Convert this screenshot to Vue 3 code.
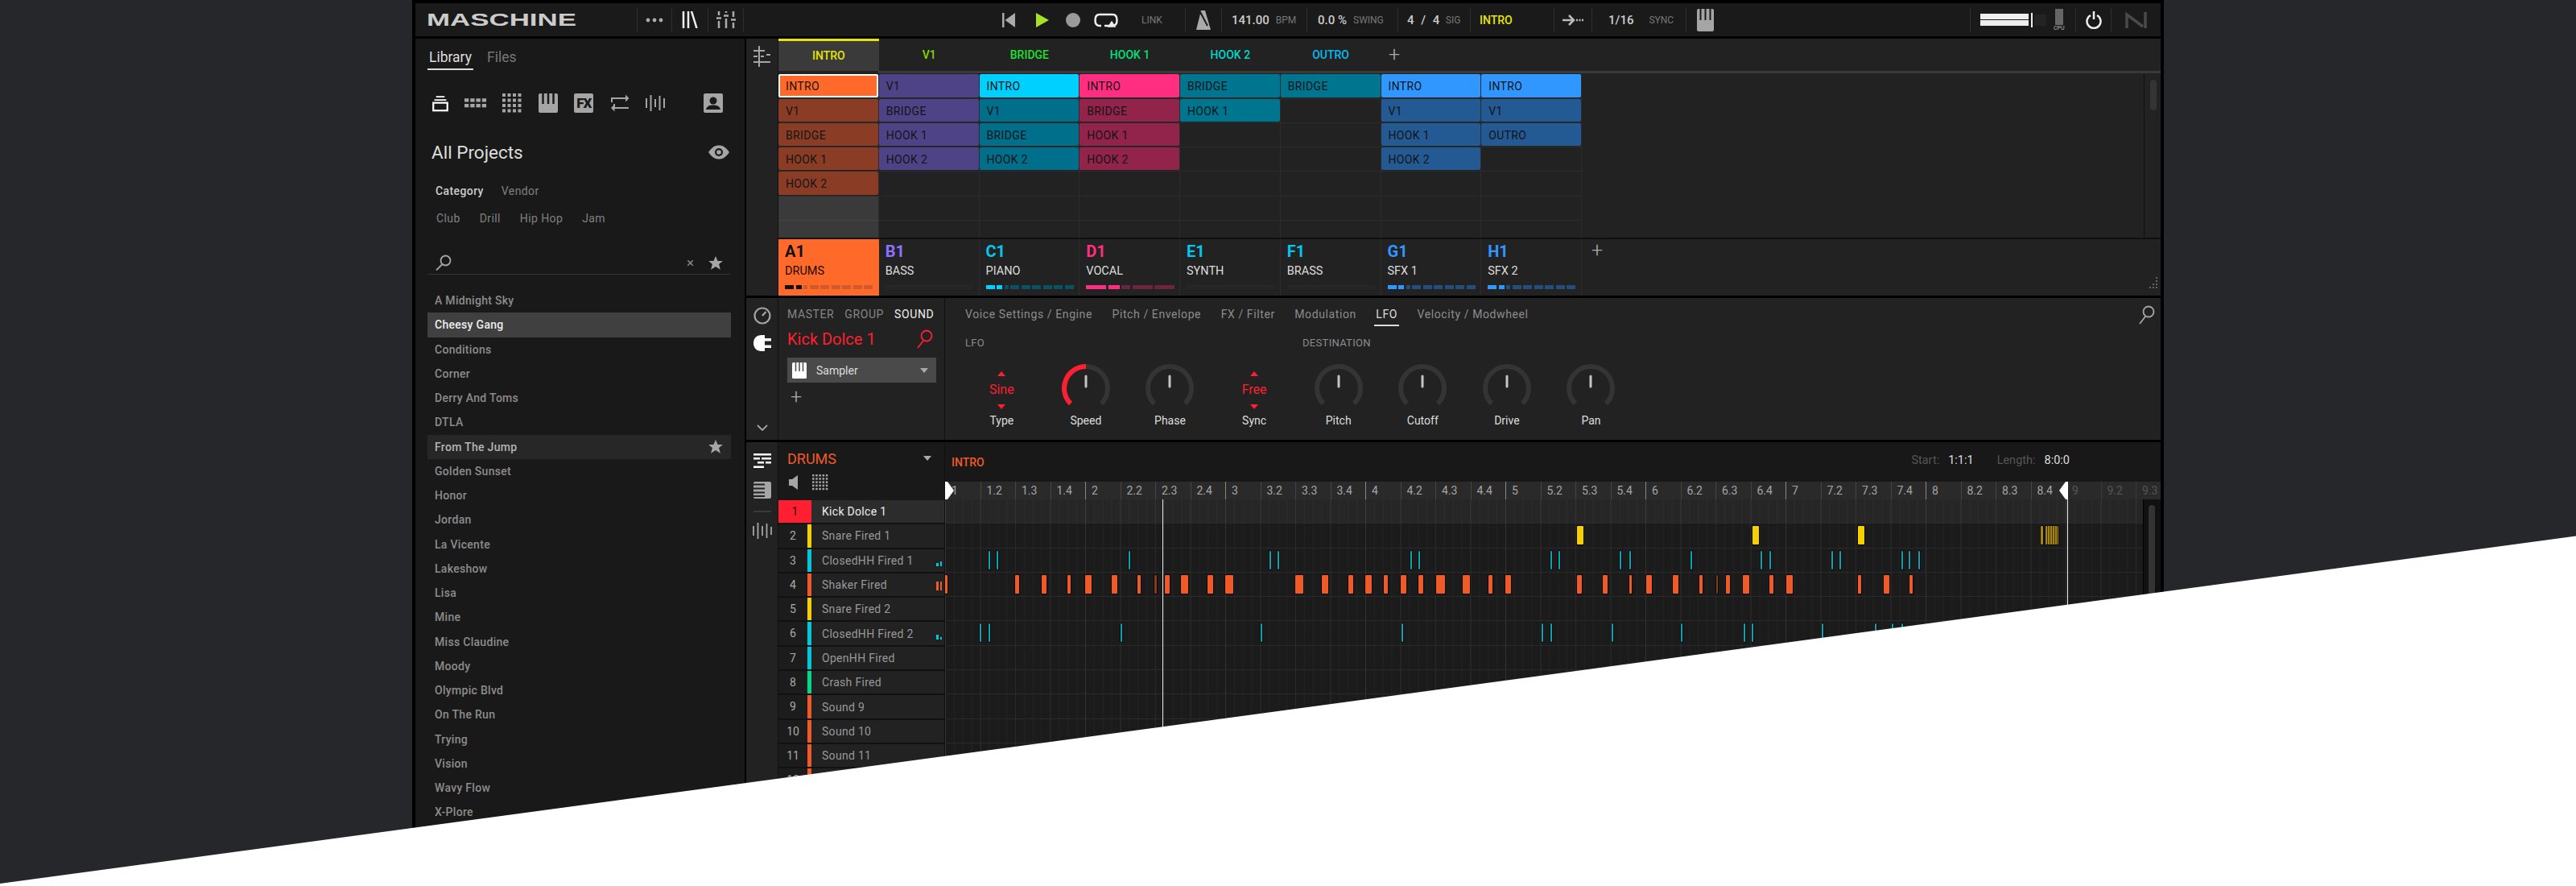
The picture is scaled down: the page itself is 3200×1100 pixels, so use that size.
<template>
  <div class="page">
    <div class="app">
      <!-- top bar -->
      <header class="topbar">
        <div class="seg seg-logo"><span class="logo">MASCHINE</span></div>
        <div class="seg sep center">
          <svg width="22" height="6" viewBox="0 0 22 6" fill="#aaa"><circle cx="3" cy="3" r="2.4" /><circle cx="11" cy="3" r="2.4" /><circle cx="19" cy="3" r="2.4" /></svg>
        </div>
        <div class="seg sep center">
          <svg width="20" height="21" viewBox="0 0 20 21" fill="none" stroke="#eee" stroke-width="2.500"><path d="M2 0V21M8 0V21M12 0L18.500 21" /></svg>
        </div>
        <div class="seg sep center">
          <svg width="24" height="21" viewBox="0 0 24 21" fill="none" stroke="#aaa" stroke-width="2.500"><path d="M3 0V5M3 12V21M12 0V2M12 9V21M21 0V7M21 14V21" /><path d="M0 8.500H6M9 5.500H15M18 10.500H24" /></svg>
        </div>
        <div class="seg sep transport">
          <svg width="17" height="20" viewBox="0 0 17 20"><rect x="0" y="1" width="2.500" height="18" fill="#aaa" /><path d="M16 1V19L3.500 10Z" fill="#aaa" /></svg>
          <svg class="t-play" width="16" height="20" viewBox="0 0 16 20"><path d="M0 1V19L16 10Z" fill="#a6e22a" /></svg>
          <svg class="t-rec" width="18" height="20" viewBox="0 0 18 20"><ellipse cx="9" cy="10" rx="9" ry="9" fill="#9a9a9a" /></svg>
          <svg class="t-loop" width="30" height="20" viewBox="0 0 30 20" fill="none" stroke="#eee" stroke-width="2.500"><path d="M9 17H7C3 17 1.500 14 1.500 10S3 3 7 3H23C27 3 28.500 6 28.500 10S27 17 23 17H13" /><path d="M22 13L19 17.500H25Z" fill="#eee" /></svg>
          <span class="dim t-link">LINK</span>
        </div>
        <div class="seg sep center">
          <svg width="18" height="24" viewBox="0 0 18 24"><path d="M6 0H11L18 24H0Z" fill="#aaa" /><path d="M5 2L14 19" stroke="#1a1a1a" stroke-width="2" /></svg>
        </div>
        <div class="seg sep pad-12"><span class="val">141.00</span><span class="dim unit">BPM</span></div>
        <div class="seg sep pad-13"><span class="val">0.0 %</span><span class="dim unit">SWING</span></div>
        <div class="seg sep pad-11"><span class="val wide">4 / 4</span><span class="dim unit-s">SIG</span></div>
        <div class="seg sep pad-11"><span class="scene-name">INTRO</span></div>
        <div class="seg sep center">
          <svg width="26" height="14" viewBox="0 0 26 14"><path d="M0 7H12M8 1L14 7L8 13" fill="none" stroke="#bbb" stroke-width="2.500" /><path d="M17 7H26" stroke="#bbb" stroke-width="2.500" stroke-dasharray="2 1.500" /></svg>
        </div>
        <div class="seg sep pad-21"><span class="val">1/16</span><span class="dim unit-sync">SYNC</span></div>
        <div class="seg sep pad-13">
          <svg width="21" height="28" viewBox="0 0 21 28"><rect width="21" height="28" rx="2" fill="#a5a5a5" /><path d="M4.500 0V14M10.500 0V14M16.500 0V14" stroke="#1a1a1a" stroke-width="2" /></svg>
        </div>
        <div class="seg sep meter-seg">
          <div class="meter"><i></i><i></i></div>
          <b class="meter-tick"></b>
          <div class="meter-dim"></div>
          <div class="cpu"><i></i><span>CPU</span></div>
        </div>
        <div class="seg sep center">
          <svg width="20" height="22" viewBox="0 0 20 22" fill="none" stroke="#eee" stroke-width="2.500"><path d="M6 5A8.500 8.500 0 1 0 14 5" /><path d="M10 0V10" /></svg>
        </div>
        <div class="seg sep center">
          <svg width="28" height="20" viewBox="0 0 28 20" fill="none" stroke="#4a4a4a" stroke-width="3.500"><path d="M2 20V3L22 18M25 0V20" /></svg>
        </div>
      </header>

      <div class="body">
        <!-- browser -->
        <aside class="sidebar">
          <nav class="lib-tabs">
            <span class="lib-tab active">Library</span>
            <span class="lib-tab">Files</span>
          </nav>
          <div class="type-icons">
            <span><svg width="22" height="21" viewBox="0 0 24 24" fill="none" stroke="#fff"><path d="M6 2.500H18M3.500 7H20.500" stroke-width="2" /><rect x="2" y="11" width="20" height="11" stroke-width="2.500" /></svg></span>
            <span><svg width="29" height="12" viewBox="0 0 30 12" fill="#a5a5a5"><g v-for="c in 4" :key="c"><rect :x="(c - 1) * 7.500" y="0" width="5.500" height="4.500" /><rect :x="(c - 1) * 7.500" y="7" width="5.500" height="4.500" /></g></svg></span>
            <span><svg width="24" height="24" viewBox="0 0 24 24" fill="#a5a5a5"><g v-for="c in 16" :key="c"><rect :x="((c - 1) % 4) * 6.500" :y="Math.floor((c - 1) / 4) * 6.500" width="4" height="4" /></g></svg></span>
            <span><svg width="24" height="24" viewBox="0 0 24 24"><rect width="24" height="24" rx="2" fill="#a5a5a5" /><path d="M5.500 0V13M12 0V13M18.500 0V13" stroke="#191919" stroke-width="2.500" /></svg></span>
            <span><div class="fx-icon">FX</div></span>
            <span><svg width="24" height="24" viewBox="0 0 24 24" fill="none" stroke="#a5a5a5" stroke-width="2"><path d="M2 11V6H20M23 18H5V13" /><path d="M19 1.500L23.500 6L19 10.500Z" fill="#a5a5a5" stroke="none" /><path d="M5.500 13.500L1 18L5.500 22.500Z" fill="#a5a5a5" stroke="none" /></svg></span>
            <span><svg width="24" height="24" viewBox="0 0 24 24" stroke="#a5a5a5" stroke-width="2"><path d="M1 6V18M6.500 2V22M12 7V17M17.500 3V21M23 6V18" /></svg></span>
            <span class="user-icon"><svg width="24" height="24" viewBox="0 0 24 24"><rect width="24" height="24" rx="2" fill="#a5a5a5" /><circle cx="12" cy="9" r="4.500" fill="#191919" /><path d="M3 20C4 15.500 8 14.500 12 14.500S20 15.500 21 20Z" fill="#191919" /></svg></span>
          </div>
          <div class="all-projects">
            <span>All Projects</span>
            <svg width="26" height="18" viewBox="0 0 26 18"><path d="M0 9C4 3 8 .5 13 .5S22 3 26 9C22 15 18 17.500 13 17.500S4 15 0 9Z" fill="#a5a5a5" /><circle cx="13" cy="9" r="5" fill="#191919" /><circle cx="13" cy="9" r="2.800" fill="#a5a5a5" /></svg>
          </div>
          <div class="filter-a"><span class="on">Category</span><span>Vendor</span></div>
          <div class="filter-b"><span>Club</span><span>Drill</span><span>Hip Hop</span><span>Jam</span></div>
          <div class="search">
            <svg width="20" height="20" viewBox="0 0 20 20" fill="none" stroke="#a5a5a5" stroke-width="1.800"><circle cx="12.500" cy="7.500" r="6" /><path d="M8.500 12L1 19.500" /></svg>
            <span class="clear">×</span>
            <svg class="star" width="18" height="17" viewBox="0 0 24 23"><path d="M12 0L15.500 8H24L17.500 13.500L20 22.500L12 17.500L4 22.500L6.500 13.500L0 8H8.500Z" fill="#a5a5a5" /></svg>
          </div>
          <ul class="projects">
            <li v-for="p in projects" :key="p" :class="{ selected: p === 'Cheesy Gang', hovered: p === 'From The Jump' }">
              <span>{{ p }}</span>
              <svg v-if="p === 'From The Jump'" width="18" height="17" viewBox="0 0 24 23"><path d="M12 0L15.500 8H24L17.500 13.500L20 22.500L12 17.500L4 22.500L6.500 13.500L0 8H8.500Z" fill="#a5a5a5" /></svg>
            </li>
          </ul>
        </aside>

        <main class="workspace">
          <!-- arranger -->
          <section class="arrange">
            <div class="strip">
              <svg class="strip-a" width="21" height="26" viewBox="0 0 21 26" stroke="#a5a5a5" stroke-width="2"><path d="M7 0V26M0 6H14M0 13H5M9 13H13M16 11H21M0 20H21" /></svg>
            </div>
            <div class="arrange-main">
              <div class="scenes">
                <div v-for="(s, i) in scenes" :key="s.name" class="scene" :class="{ current: i === 0 }" :style="{ color: s.color }">{{ s.name }}</div>
                <span class="plus scene-plus">+</span>
              </div>
              <div class="scene-rule"></div>
              <div class="clip-area">
                <div class="clip-grid">
                  <template v-for="(col, c) in clips" :key="c">
                    <div v-for="(cell, r) in col" :key="r" class="cell" :class="{ 'cell-lit': c === 0 && !cell }">
                      <div v-if="cell" class="clip" :class="{ chosen: c === 0 && r === 0 }" :style="{ background: r === 0 ? groups[c].bright : groups[c].dim }">{{ cell }}</div>
                    </div>
                  </template>
                </div>
                <div class="clip-scroll"><i></i></div>
              </div>
              <div class="group-row">
                <div v-for="(g, i) in groups" :key="g.id" class="group" :class="{ active: i === 0 }">
                  <div class="group-id" :style="{ color: i === 0 ? '#111' : g.label }">{{ g.id }}</div>
                  <div class="group-name">{{ g.name }}</div>
                  <div class="group-bars">
                    <i v-for="(b, k) in g.bars" :key="k" :style="{ width: b.w + 'px', background: b.c }"></i>
                  </div>
                </div>
                <span class="plus group-plus">+</span>
                <svg class="grip" width="12" height="16" viewBox="0 0 12 16" fill="#666"><rect x="9" y="0" width="2" height="2" /><rect x="9" y="4" width="2" height="2" /><rect x="5" y="8" width="2" height="2" /><rect x="9" y="8" width="2" height="2" /><rect x="1" y="12" width="2" height="2" /><rect x="5" y="12" width="2" height="2" /><rect x="9" y="12" width="2" height="2" /></svg>
              </div>
            </div>
          </section>

          <!-- plug-in / parameters -->
          <section class="sound">
            <div class="strip strip-col">
              <svg class="strip-dial" width="22" height="22" viewBox="0 0 22 22" fill="none" stroke="#a5a5a5" stroke-width="2.200"><circle cx="11" cy="11" r="9.500" /><path d="M11 11L15.500 6" /></svg>
              <svg class="strip-plug" width="22" height="20" viewBox="0 0 22 20"><path d="M10 0H14V20H10C4 20 0 16 0 10S4 0 10 0Z" fill="#fff" /><rect x="14" y="4" width="8" height="3.500" fill="#fff" /><rect x="14" y="12.500" width="8" height="3.500" fill="#fff" /></svg>
              <svg class="strip-chev" width="14" height="8" viewBox="0 0 14 8" fill="none" stroke="#a5a5a5" stroke-width="1.800"><path d="M1 1L7 7L13 1" /></svg>
            </div>
            <div class="sound-left">
              <div class="level-tabs"><span>MASTER</span><span>GROUP</span><span class="on">SOUND</span></div>
              <div class="sound-name">
                <span>Kick Dolce 1</span>
                <svg width="20" height="24" viewBox="0 0 20 24" fill="none" stroke="#ff1f30" stroke-width="1.800"><circle cx="12" cy="8" r="6.500" /><path d="M8 14L1 23" /></svg>
              </div>
              <div class="plugin">
                <svg width="18" height="20" viewBox="0 0 18 20"><rect width="18" height="20" rx="1.500" fill="#fff" /><path d="M4.500 0V11M9 0V11M13.500 0V11" stroke="#4a4a4a" stroke-width="1.500" /></svg>
                <span>Sampler</span>
                <em class="tri-down"></em>
              </div>
              <span class="plus plugin-plus">+</span>
            </div>
            <div class="sound-right">
              <div class="param-tabs">
                <span v-for="t in paramTabs" :key="t" :class="{ on: t === 'LFO' }">{{ t }}</span>
                <svg class="param-search" width="20" height="24" viewBox="0 0 20 24" fill="none" stroke="#a5a5a5" stroke-width="1.800"><circle cx="12" cy="8" r="6.500" /><path d="M8 14L1 23" /></svg>
              </div>
              <div class="param-heads"><span>LFO</span><span class="dest">DESTINATION</span></div>
              <div class="controls">
                <div v-for="c in controls" :key="c.label" class="control">
                  <div v-if="c.value" class="stepper">
                    <em class="tri-up"></em>
                    <span>{{ c.value }}</span>
                    <em class="tri-red"></em>
                  </div>
                  <svg v-else width="60" height="60" viewBox="0 0 60 60" fill="none">
                    <path d="M10.900 49.100A27 27 0 1 1 49.100 49.100" stroke="#343434" stroke-width="6" />
                    <path v-if="c.active" d="M10.900 49.100A27 27 0 0 1 30 3" stroke="#ff1f30" stroke-width="6" />
                    <path d="M30 15V28" stroke="#c4c4c4" stroke-width="3" stroke-linecap="round" />
                  </svg>
                  <label>{{ c.label }}</label>
                </div>
              </div>
            </div>
          </section>

          <!-- pattern editor -->
          <section class="pattern">
            <div class="strip strip-col">
              <svg class="strip-lines" width="22" height="19" viewBox="0 0 22 19" fill="#fff"><rect width="22" height="2.500" /><rect y="5" width="8" height="2.500" /><rect x="10" y="5" width="12" height="2.500" /><rect x="5" y="10" width="8" height="2.500" /><rect x="15" y="10" width="7" height="2.500" /><rect y="15.500" width="13" height="2.500" /></svg>
              <svg class="strip-list" width="22" height="21" viewBox="0 0 22 21"><rect width="22" height="21" rx="2" fill="#a5a5a5" /><path d="M0 3.500H14M0 8.500H14M0 13.500H14M0 18H14" stroke="#222" stroke-width="2" /></svg>
              <i class="strip-rule"></i>
              <svg class="strip-wave" width="24" height="22" viewBox="0 0 24 22" stroke="#a5a5a5" stroke-width="1.800"><path d="M1 5V17M6.500 1V21M12 5V17M17.500 2V20M23 6V16" /></svg>
            </div>
            <div class="pads">
              <div class="pads-head">
                <div class="pads-title"><span>DRUMS</span><em class="tri-down"></em></div>
                <div class="pads-tools">
                  <svg width="12" height="18" viewBox="0 0 12 18" fill="#a5a5a5"><path d="M0 5H4L11 0V18L4 13H0Z" /></svg>
                  <svg width="20" height="20" viewBox="0 0 20 20" fill="#a5a5a5"><g v-for="c in 25" :key="c"><rect :x="((c - 1) % 5) * 4.200" :y="Math.floor((c - 1) / 5) * 4.200" width="2.500" height="2.500" /></g></svg>
                </div>
              </div>
              <div v-for="(s, i) in sounds" :key="s.name" class="pad" :class="{ picked: i === 0 }">
                <div class="pad-no" :style="i === 0 ? { background: s.color } : null">{{ i + 1 }}</div>
                <b class="pad-color" :style="{ background: s.color }"></b>
                <span class="pad-name">{{ s.name }}</span>
                <div v-if="s.level" class="pad-level">
                  <i :style="{ height: s.level[0] + 'px', background: s.color }"></i>
                  <i :style="{ height: s.level[1] + 'px', background: s.color }"></i>
                </div>
              </div>
            </div>
            <div class="timeline">
              <div class="tl-head">
                <span class="tl-name">INTRO</span>
                <div class="tl-info"><span class="k">Start:</span><span class="v">1:1:1</span><span class="k k2">Length:</span><span class="v">8:0:0</span></div>
              </div>
              <div class="ruler">
                <div v-for="t in ticks" :key="t.label" class="tick" :class="{ bar: t.bar, off: t.off }">{{ t.label }}</div>
                <svg class="loop-start" width="11" height="22" viewBox="0 0 11 22"><path d="M0 0H3L11 11L3 22H0Z" fill="#fff" /></svg>
                <svg class="loop-end" width="11" height="22" viewBox="0 0 11 22"><path d="M11 0H8L0 11L8 22H11Z" fill="#fff" /></svg>
              </div>
              <div class="roll">
                <div class="lanes">
                  <div v-for="(s, i) in sounds" :key="s.name" class="lane" :class="{ picked: i === 0 }">
                    <div v-for="(n, k) in notes[i] || []" :key="k" class="note" :style="{ left: n[0] - 1175 + 'px', width: n[1] + 'px', background: n[2] || s.note }"></div>
                  </div>
                  <b class="head head-play"></b>
                  <b class="head head-end"></b>
                </div>
                <div class="roll-scroll"><i></i></div>
              </div>
            </div>
          </section>
        </main>
      </div>
    </div>
    <svg class="cut" width="3200" height="1100" viewBox="0 0 3200 1100"><path d="M0 1097L3200 665.500V1100H0Z" fill="#fff" /></svg>
  </div>
</template>

<script setup>
const projects = ['A Midnight Sky', 'Cheesy Gang', 'Conditions', 'Corner', 'Derry And Toms', 'DTLA', 'From The Jump', 'Golden Sunset', 'Honor', 'Jordan', 'La Vicente', 'Lakeshow', 'Lisa', 'Mine', 'Miss Claudine', 'Moody', 'Olympic Blvd', 'On The Run', 'Trying', 'Vision', 'Wavy Flow', 'X-Plore']

const scenes = [
  { name: 'INTRO', color: '#e6e600' },
  { name: 'V1', color: '#86d800' },
  { name: 'BRIDGE', color: '#1fe02f' },
  { name: 'HOOK 1', color: '#00e07c' },
  { name: 'HOOK 2', color: '#00d8cc' },
  { name: 'OUTRO', color: '#00bdf0' }
]

const seg = (color, dimColor, first = 11, second = 7) => {
  const bars = [{ w: first, c: color }, { w: second, c: color }]
  for (let i = 0; i < 7; i++) bars.push({ w: i === 0 ? 5 : 11, c: dimColor })
  return bars
}
const empty = [{ w: 109, c: '#262626' }]

const groups = [
  { id: 'A1', name: 'DRUMS', label: '#111', bright: '#ff6a2b', dim: '#8a3d24', bars: seg('#111', '#cf5a2a') },
  { id: 'B1', name: 'BASS', label: '#8f70ff', bright: '#4f4387', dim: '#4f4387', bars: empty },
  { id: 'C1', name: 'PIANO', label: '#00c8f0', bright: '#00d0ff', dim: '#006f8c', bars: seg('#00d0ff', '#0a5163') },
  { id: 'D1', name: 'VOCAL', label: '#ff2e80', bright: '#ff2e80', dim: '#92244c', bars: [{ w: 25, c: '#ff2e80' }, { w: 14, c: '#ff2e80' }, { w: 11, c: '#6b2440' }, { w: 25, c: '#6b2440' }, { w: 25, c: '#6b2440' }] },
  { id: 'E1', name: 'SYNTH', label: '#00c8f0', bright: '#007590', dim: '#007590', bars: empty },
  { id: 'F1', name: 'BRASS', label: '#00c8f0', bright: '#007590', dim: '#007590', bars: empty },
  { id: 'G1', name: 'SFX 1', label: '#2f97ff', bright: '#2f97ff', dim: '#245a94', bars: seg('#2f97ff', '#234d7a') },
  { id: 'H1', name: 'SFX 2', label: '#2f97ff', bright: '#2f97ff', dim: '#245a94', bars: seg('#2f97ff', '#234d7a') }
]

const clips = [
  ['INTRO', 'V1', 'BRIDGE', 'HOOK 1', 'HOOK 2', '', ''],
  ['V1', 'BRIDGE', 'HOOK 1', 'HOOK 2', '', '', ''],
  ['INTRO', 'V1', 'BRIDGE', 'HOOK 2', '', '', ''],
  ['INTRO', 'BRIDGE', 'HOOK 1', 'HOOK 2', '', '', ''],
  ['BRIDGE', 'HOOK 1', '', '', '', '', ''],
  ['BRIDGE', '', '', '', '', '', ''],
  ['INTRO', 'V1', 'HOOK 1', 'HOOK 2', '', '', ''],
  ['INTRO', 'V1', 'OUTRO', '', '', '', '']
]

const paramTabs = ['Voice Settings / Engine', 'Pitch / Envelope', 'FX / Filter', 'Modulation', 'LFO', 'Velocity / Modwheel']

const controls = [
  { label: 'Type', value: 'Sine' },
  { label: 'Speed', active: true },
  { label: 'Phase' },
  { label: 'Sync', value: 'Free' },
  { label: 'Pitch' },
  { label: 'Cutoff' },
  { label: 'Drive' },
  { label: 'Pan' }
]

const sounds = [
  { name: 'Kick Dolce 1', color: '#ff1f30', note: '#ff1f30' },
  { name: 'Snare Fired 1', color: '#f5cf00', note: '#f5cf00' },
  { name: 'ClosedHH Fired 1', color: '#00c8dc', note: '#0aa5b5', level: [4, 6] },
  { name: 'Shaker Fired', color: '#f05a28', note: '#f05a28', level: [11, 11] },
  { name: 'Snare Fired 2', color: '#f5cf00', note: '#f5cf00' },
  { name: 'ClosedHH Fired 2', color: '#00c8dc', note: '#0aa5b5', level: [6, 3] },
  { name: 'OpenHH Fired', color: '#00c8dc', note: '#0aa5b5' },
  { name: 'Crash Fired', color: '#00d88a', note: '#00d88a' },
  { name: 'Sound 9', color: '#f05a28', note: '#f05a28' },
  { name: 'Sound 10', color: '#f05a28', note: '#f05a28' },
  { name: 'Sound 11', color: '#f05a28', note: '#f05a28' },
  { name: 'Sound 12', color: '#f05a28', note: '#f05a28' }
]

// ruler runs from bar 1 to 9.3, one cell per beat
const ticks = []
for (let bar = 1; bar <= 9; bar++) {
  for (let beat = 1; beat <= 4; beat++) {
    if (bar === 9 && beat === 4) continue
    ticks.push({ label: beat === 1 ? `${bar}` : `${bar}.${beat}`, bar: beat === 1, off: bar === 9 })
  }
}

const thin = (xs) => xs.map((x) => [x - 1, 2])
const shaker = [
  [1175, 3], [1262, 5], [1295, 6], [1327, 4], [1349, 8], [1382, 7], [1414, 4], [1435, 3, '#8a3a1c'], [1448, 6], [1468, 9], [1501, 7], [1523, 10],
  [1610, 10], [1643, 8], [1676, 6], [1697, 8], [1720, 5], [1741, 7], [1763, 6], [1785, 11], [1818, 9], [1850, 5], [1871, 7], [1960, 6], [1992, 6],
  [2025, 3], [2046, 7], [2079, 7], [2112, 4], [2133, 2, '#8a3a1c'], [2145, 5], [2166, 8], [2199, 5], [2220, 8], [2309, 4], [2341, 7], [2373, 4]
]
const snare = [[1960, 8], [2178, 8], [2309, 8], [2536, 3, '#a8860a'], [2542, 16, 'repeating-linear-gradient(90deg, #a8860a 0 2px, #3a2f08 2px 3px)']]
const hh1 = thin([1230, 1240, 1404, 1579, 1589, 1754, 1764, 1928, 1938, 2014, 2026, 2102, 2189, 2200, 2277, 2287, 2364, 2373, 2385])
const hh2 = thin([1219, 1230, 1394, 1568, 1743, 1917, 1928, 2004, 2090, 2168, 2178, 2265, 2331, 2352, 2364])
const notes = [[], snare, hh1, shaker, [], hh2]
</script>

<style scoped>
.page {
  position: relative;
  width: 3200px;
  height: 1100px;
  overflow: hidden;
  background: #26272b;
  font-family: Roboto, "Liberation Sans", sans-serif;
  color: #aaa;
}

.app {
  box-sizing: border-box;
  width: 2176px;
  height: 1100px;
  margin-left: 512px;
  padding: 4px 4px 0;
  background: #000;
  display: flex;
  flex-direction: column;
}

.cut {
  position: absolute;
  left: 0;
  top: 0;
}

/* top bar */
.topbar {
  height: 41px;
  flex: none;
  background: #1a1a1a;
  display: grid;
  grid-template-columns: 275px 43px 45px 44px 549px 45px 106px 113px 90px 104px 47px 117px 353px 131px 44px 62px;
  align-items: center;
}

.seg {
  box-sizing: border-box;
  height: 30px;
  display: flex;
  align-items: center;
  white-space: nowrap;
}

.sep {
  border-left: 1px solid #2e2e2e;
}

.center {
  justify-content: center;
}

.seg-logo {
  padding-left: 14px;
}

.logo {
  display: inline-block;
  font-family: "Liberation Sans", sans-serif;
  font-weight: 700;
  font-size: 22px;
  line-height: 22px;
  color: #ccc;
  transform: scaleX(1.585);
  transform-origin: left center;
}

.transport {
  padding-left: 321px;
}

.t-play {
  margin-left: 25px;
}

.t-rec {
  margin-left: 21px;
}

.t-loop {
  margin-left: 17px;
}

.dim {
  color: #777;
}

.t-link {
  margin-left: 29px;
  font-size: 12px;
}

.val {
  font-size: 15px;
  font-weight: 500;
  color: #ccc;
}

.wide {
  letter-spacing: 1.500px;
  word-spacing: 2px;
}

.unit {
  margin-left: 8px;
  font-size: 12px;
}

.unit-s {
  margin-left: 6px;
  font-size: 12px;
}

.unit-sync {
  margin-left: 19px;
  font-size: 12px;
}

.pad-11 {
  padding-left: 11px;
}

.pad-12 {
  padding-left: 12px;
}

.pad-13 {
  padding-left: 13px;
}

.pad-21 {
  padding-left: 20px;
}

.scene-name {
  font-size: 14px;
  font-weight: 500;
  color: #e6e600;
}

.meter-seg {
  padding-left: 12px;
  position: relative;
}

.meter i {
  display: block;
  width: 60px;
  height: 7px;
  background: #eee;
  margin: 1px 0;
}

.meter-tick {
  width: 2px;
  height: 18px;
  background: #eee;
  margin-left: 3px;
}

.meter-dim {
  width: 15px;
  height: 14px;
  margin-left: 2px;
  background: #232323;
}

.cpu {
  margin-left: 9px;
  display: flex;
  flex-direction: column;
  align-items: center;
}

.cpu i {
  width: 10px;
  height: 20px;
  background: #666;
}

.cpu span {
  font-size: 7px;
  line-height: 8px;
  color: #bbb;
}

/* sidebar */
.body {
  flex: 1;
  display: flex;
  margin-top: 3px;
  min-height: 0;
}

.sidebar {
  box-sizing: border-box;
  width: 409px;
  flex: none;
  margin-right: 2px;
  padding: 11px 17px 0 15px;
  background: #191919;
  overflow: hidden;
}

.lib-tabs {
  display: flex;
  gap: 15px;
  height: 28px;
}

.lib-tab {
  padding: 0 2px;
  height: 24px;
  font-size: 17.500px;
  line-height: 24px;
  color: #777;
}

.lib-tab.active {
  color: #ddd;
  border-bottom: 2px solid #ddd;
  height: 26px;
}

.type-icons {
  display: flex;
  align-items: center;
  height: 24px;
  margin-top: 29px;
  margin-left: -6px;
}

.type-icons span {
  width: 45.500px;
  display: flex;
  justify-content: center;
  align-items: center;
}

.type-icons .user-icon {
  margin-left: 27px;
}

.fx-icon {
  width: 24px;
  height: 24px;
  background: #a5a5a5;
  border-radius: 2px;
  text-align: center;
  font-size: 17px;
  line-height: 24px;
  font-weight: 900;
  color: #191919;
  letter-spacing: -1px;
}

.all-projects {
  display: flex;
  justify-content: space-between;
  align-items: center;
  height: 28px;
  margin-top: 35px;
  padding: 0 2px 0 5px;
  font-size: 22.500px;
  color: #ddd;
}

.filter-a,
.filter-b {
  display: flex;
  height: 20px;
  padding-left: 10px;
  font-size: 14px;
  line-height: 20px;
  color: #808080;
  letter-spacing: .4px;
}

.filter-a {
  margin-top: 24px;
  gap: 22px;
}

.filter-a .on {
  font-weight: 500;
  color: #ccc;
}

.filter-b {
  margin-top: 14px;
  gap: 24px;
  padding-left: 11px;
}

.search {
  display: flex;
  align-items: center;
  height: 28px;
  margin-top: 31px;
  padding: 0 10px 0 10px;
  border-bottom: 1px solid #333;
}

.clear {
  margin-left: auto;
  font-size: 17px;
  color: #888;
}

.star {
  margin-left: 18px;
}

.projects {
  list-style: none;
  margin: 17px 0 0;
  padding: 0;
}

.projects li {
  display: flex;
  justify-content: space-between;
  align-items: center;
  height: 30.250px;
  padding: 0 10px 0 9px;
  box-sizing: border-box;
  font-size: 14px;
  font-weight: 500;
  letter-spacing: .3px;
  color: #8c8c8c;
}

.projects li.selected {
  background: #404040;
  color: #eee;
}

.projects li.hovered {
  background: #272727;
  color: #b5b5b5;
}

/* workspace */
.workspace {
  flex: 1;
  display: flex;
  flex-direction: column;
  min-width: 0;
}

.strip {
  box-sizing: border-box;
  width: 40px;
  flex: none;
  background: #222;
  border-right: 1px solid #111;
  display: flex;
  justify-content: center;
}

.strip-col {
  flex-direction: column;
  align-items: center;
  justify-content: flex-start;
}

.strip-a {
  margin-top: 9px;
}

.arrange {
  height: 319px;
  flex: none;
  display: flex;
}

.arrange-main {
  flex: 1;
  min-width: 0;
  display: flex;
  flex-direction: column;
  background: #222;
}

.scenes {
  position: relative;
  height: 40px;
  display: flex;
}

.scene {
  width: 124.750px;
  text-align: center;
  font-size: 14px;
  line-height: 40px;
  font-weight: 500;
}

.scene.current {
  box-sizing: border-box;
  border-top: 3px solid #e6e600;
  line-height: 37px;
  background: #3a3a3a;
}

.plus {
  position: absolute;
  font-size: 25px;
  line-height: 20px;
  font-weight: 300;
  color: #aaa;
}

.scene-plus {
  left: 758px;
  top: 10px;
}

.scene-rule {
  height: 4px;
  background: #3a3a3a;
  margin-left: 124px;
}

.clip-area {
  display: flex;
  height: 203px;
  margin-top: 1px;
}

.clip-grid {
  width: 1696px;
  flex: none;
  display: grid;
  grid-auto-flow: column;
  grid-template-rows: repeat(6, 30.300px) 21px;
  grid-template-columns: repeat(8, 124.750px);
}

.cell {
  box-sizing: border-box;
  background: #222;
  border-right: 1px solid #2c2c2c;
  border-bottom: 1px solid #2c2c2c;
  padding-bottom: 1px;
}

.cell:nth-child(7n) {
  border-bottom: none;
}

.cell-lit {
  background: #3a3a3a;
  border-bottom-color: #444;
}

.clip {
  box-sizing: border-box;
  height: 100%;
  border-radius: 2px;
  padding-left: 9px;
  font-size: 14px;
  line-height: 30px;
  letter-spacing: .35px;
  color: #141414;
}

.clip.chosen {
  border: 2px solid #fff;
  padding-left: 7px;
  line-height: 26px;
}

.clip-scroll {
  flex: 1;
  border-left: 1px solid #111;
  position: relative;
}

.clip-scroll i {
  position: absolute;
  left: 7px;
  top: 7px;
  width: 8px;
  height: 38px;
  border-radius: 4px;
  background: #343434;
}

.group-row {
  position: relative;
  flex: none;
  height: 70px;
  margin-top: 2px;
  display: flex;
  box-shadow: 0 -2px 0 #111;
}

.group {
  box-sizing: border-box;
  width: 124.750px;
  padding: 1px 0 0 8px;
  border-right: 1px solid #2c2c2c;
}

.group.active {
  background: #ff6a2b;
  border-right: none;
}

.group-id {
  font-size: 20px;
  line-height: 28px;
  font-weight: 700;
}

.group-name {
  margin-top: 2px;
  font-size: 14.500px;
  line-height: 18px;
  color: #ddd;
}

.group.active .group-name {
  color: #1a0a04;
}

.group-bars {
  display: flex;
  gap: 2.500px;
  height: 5px;
  margin-top: 8px;
}

.group-plus {
  left: 1010px;
  top: 4px;
}

.grip {
  position: absolute;
  right: 3px;
  bottom: 7px;
}

/* sound panel */
.sound {
  height: 176px;
  flex: none;
  margin-top: 3px;
  display: flex;
  background: #222;
}

.strip-dial {
  margin-top: 11px;
}

.strip-plug {
  margin-top: 13px;
}

.strip-chev {
  margin-top: 91px;
}

.sound-left {
  position: relative;
  box-sizing: border-box;
  width: 207px;
  flex: none;
  padding: 10px 10px 0 11px;
  border-right: 1px solid #111;
}

.level-tabs {
  display: flex;
  gap: 13px;
  font-size: 14px;
  line-height: 20px;
  letter-spacing: .6px;
  color: #858585;
}

.level-tabs .on {
  color: #eee;
}

.sound-name {
  display: flex;
  justify-content: space-between;
  align-items: center;
  height: 28px;
  margin-top: 7px;
  padding-right: 4px;
  font-size: 20px;
  color: #ff1f30;
}

.plugin {
  display: flex;
  align-items: center;
  height: 31px;
  margin-top: 9px;
  padding: 0 10px 0 6px;
  background: #4a4a4a;
  font-size: 14px;
  color: #ddd;
}

.plugin span {
  margin-left: 12px;
}

.tri-down {
  margin-left: auto;
  width: 0;
  height: 0;
  border: 5px solid transparent;
  border-top: 6px solid #aaa;
  border-bottom: none;
}

.plugin-plus {
  left: 15px;
  top: 113px;
}

.sound-right {
  flex: 1;
  min-width: 0;
}

.param-tabs {
  position: relative;
  display: flex;
  gap: 24.500px;
  height: 35px;
  padding: 10px 0 0 25px;
  box-sizing: border-box;
  font-size: 14px;
  line-height: 20px;
  letter-spacing: .6px;
  color: #8c8c8c;
}

.param-tabs .on {
  color: #ddd;
  height: 23px;
  padding: 0 2px;
  margin: 0 -2px;
  border-bottom: 2px solid #ddd;
}

.param-search {
  position: absolute;
  right: 7px;
  top: 9px;
}

.param-heads {
  display: flex;
  margin-top: 12px;
  padding-left: 25px;
  font-size: 13px;
  line-height: 18px;
  letter-spacing: .3px;
  color: #8c8c8c;
}

.dest {
  margin-left: 395px;
}

.controls {
  display: flex;
  margin-top: 17px;
  padding-left: 18px;
}

.control {
  width: 104.600px;
  display: flex;
  flex-direction: column;
  align-items: center;
}

.control label {
  margin-top: 0;
  font-size: 14px;
  line-height: 20px;
  color: #ddd;
}

.stepper {
  width: 60px;
  height: 60px;
  display: flex;
  flex-direction: column;
  align-items: center;
  font-size: 16px;
  line-height: 20px;
  color: #ff1f30;
}

.stepper span {
  margin: 7px 0 8px;
}

.tri-up {
  margin-top: 9px;
  border: 5px solid transparent;
  border-bottom: 6px solid #ff1f30;
  border-top: none;
}

.tri-red {
  border: 5px solid transparent;
  border-top: 6px solid #ff1f30;
  border-bottom: none;
}

/* pattern */
.pattern {
  flex: 1;
  margin-top: 3px;
  display: flex;
  min-height: 0;
  background: #1a1a1a;
}

.strip-lines {
  margin-top: 14px;
}

.strip-list {
  margin-top: 16px;
}

.strip-rule {
  width: 22px;
  height: 2px;
  margin-top: 15px;
  background: #3a3a3a;
}

.strip-wave {
  margin-top: 12px;
}

.pads {
  box-sizing: border-box;
  width: 207px;
  flex: none;
  border-right: 1px solid #111;
  background: #191919;
}

.pads-head {
  height: 72px;
  padding-left: 11px;
}

.pads-title {
  display: flex;
  align-items: center;
  height: 40px;
  padding-right: 16px;
  font-size: 18px;
  color: #f05a28;
}

.pads-tools {
  display: flex;
  align-items: center;
  gap: 17px;
  height: 22px;
  padding-left: 2px;
  margin-top: -1px;
}

.pad {
  position: relative;
  box-sizing: border-box;
  height: 30.300px;
  display: flex;
  align-items: center;
  background: #222;
  border-bottom: 2px solid #111;
  font-size: 14px;
  color: #999;
}

.pad.picked {
  background: #2c2c2c;
  color: #eee;
}

.pad-no {
  width: 36px;
  height: 100%;
  flex: none;
  text-align: center;
  line-height: 28px;
  color: #aaa;
  background: #1c1c1c;
}

.pad.picked .pad-no {
  width: 41px;
  color: #111;
}

.pad-color {
  width: 5px;
  height: 100%;
  flex: none;
}

.pad.picked .pad-color {
  display: none;
}

.pad-name {
  margin-left: 13px;
  letter-spacing: .3px;
}

.pad-level {
  position: absolute;
  right: 3px;
  bottom: 7px;
  display: flex;
  align-items: flex-end;
  gap: 2px;
}

.pad-level i {
  width: 2.500px;
}

.timeline {
  flex: 1;
  min-width: 0;
  display: flex;
  flex-direction: column;
}

.tl-head {
  height: 49px;
  flex: none;
  display: flex;
  justify-content: space-between;
  align-items: center;
  padding: 0 113px 0 8px;
  background: #181818;
  box-sizing: border-box;
}

.tl-name {
  font-size: 14px;
  font-weight: 500;
  color: #f05a28;
}

.tl-info {
  font-size: 14.500px;
  margin-top: -4px;
}

.tl-info .k {
  color: #555;
  margin-right: 11px;
}

.tl-info .k2 {
  margin-left: 29px;
}

.tl-info .v {
  color: #ddd;
}

.ruler {
  position: relative;
  height: 22px;
  flex: none;
  display: flex;
  background: #2a2a2a;
  overflow: hidden;
}

.tick {
  box-sizing: border-box;
  width: 43.500px;
  flex: none;
  padding-left: 7px;
  border-left: 1px solid #444;
  font-size: 14px;
  line-height: 22px;
  color: #a5a5a5;
}

.tick.bar {
  border-left-color: #888;
}

.tick.off {
  color: #555;
  border-left-color: #3a3a3a;
}

.loop-start {
  position: absolute;
  left: 0;
  top: 0;
}

.loop-end {
  position: absolute;
  left: 1384px;
  top: 0;
}

.roll {
  flex: 1;
  display: flex;
  min-height: 0;
}

.lanes {
  position: relative;
  width: 1488px;
  flex: none;
  background-color: #1b1b1b;
  background-image:
    linear-gradient(90deg, #333 1px, transparent 1px),
    linear-gradient(90deg, #2a2a2a 1px, transparent 1px),
    linear-gradient(90deg, #222 1px, transparent 1px);
  background-size: 174px 100%, 43.500px 100%, 10.875px 100%;
  overflow: hidden;
}

.lane {
  position: relative;
  box-sizing: border-box;
  height: 30.300px;
  border-bottom: 1px solid #2a2a2a;
}

.lane.picked {
  background: rgba(255, 255, 255, .05);
}

.note {
  position: absolute;
  top: 3px;
  height: 23px;
  border-radius: 1px;
  box-shadow: 0 0 0 1px #0a0a0a;
}

.head {
  position: absolute;
  top: 0;
  bottom: 0;
  width: 1px;
  background: #eee;
}

.head-play {
  left: 270px;
}

.head-end {
  left: 1394px;
}

.roll-scroll {
  flex: 1;
  position: relative;
  background: #111;
  border-left: 1px solid #000;
}

.roll-scroll i {
  position: absolute;
  left: 6px;
  top: 7px;
  bottom: 0;
  width: 8px;
  border-radius: 4px;
  background: #333;
}
</style>
